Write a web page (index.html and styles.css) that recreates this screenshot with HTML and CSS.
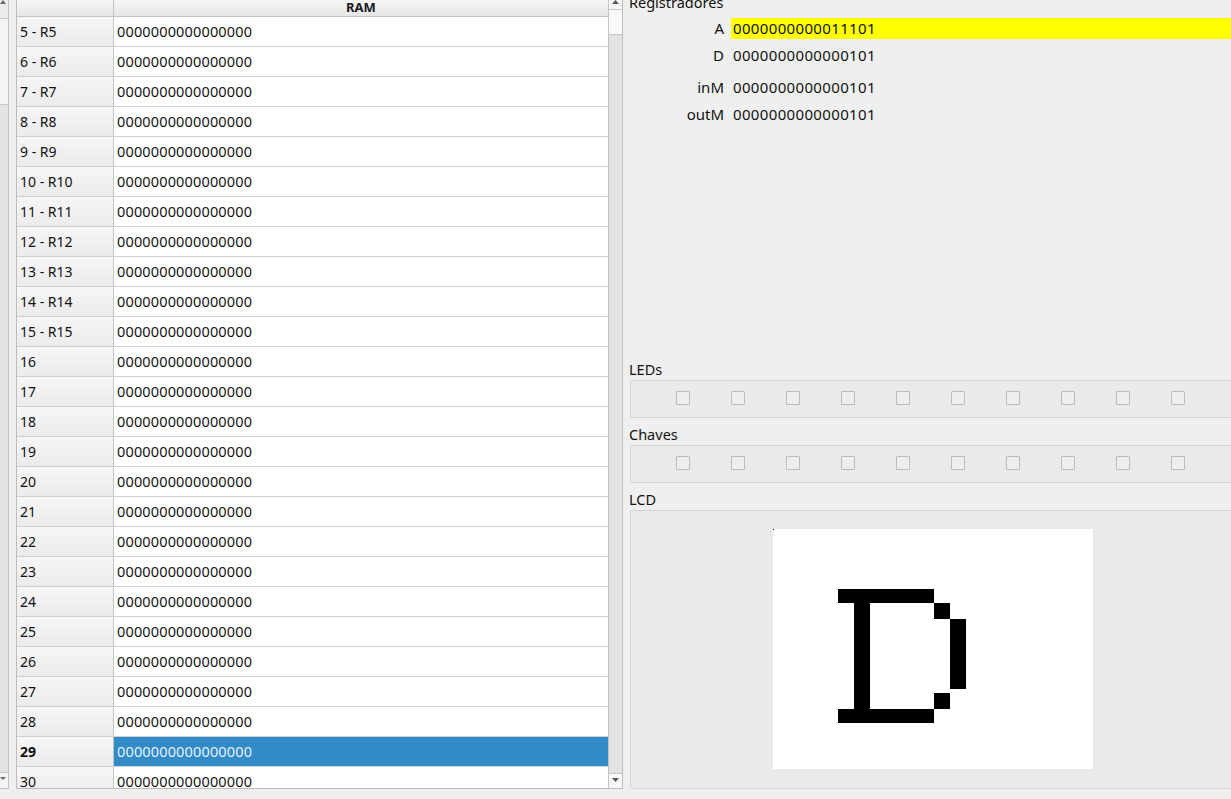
FILE: index.html
```html
<!DOCTYPE html>
<html>
<head>
<meta charset="utf-8">
<link rel="stylesheet" href="styles.css">
</head>
<body>
<div class="app">
  <div class="leftbar">
    <div class="lb-up"><svg width="8" height="6"><polygon points="0,4 3,0 6,4" fill="#6a6a6a"/></svg></div>
    <div class="lb-thumb"></div>
    <div class="lb-track"></div>
    <div class="lb-down"><svg width="8" height="6"><polygon points="0,1 6,1 3,4" fill="#6a6a6a"/></svg></div>
  </div>

  <div class="ram">
    <div class="grid">
      <div class="hdr"><div class="corner"></div><div class="hcell">RAM</div></div>
      <div class="row"><div class="rh">5 - R5</div><div class="rv">0000000000000000</div></div>
      <div class="row"><div class="rh">6 - R6</div><div class="rv">0000000000000000</div></div>
      <div class="row"><div class="rh">7 - R7</div><div class="rv">0000000000000000</div></div>
      <div class="row"><div class="rh">8 - R8</div><div class="rv">0000000000000000</div></div>
      <div class="row"><div class="rh">9 - R9</div><div class="rv">0000000000000000</div></div>
      <div class="row"><div class="rh">10 - R10</div><div class="rv">0000000000000000</div></div>
      <div class="row"><div class="rh">11 - R11</div><div class="rv">0000000000000000</div></div>
      <div class="row"><div class="rh">12 - R12</div><div class="rv">0000000000000000</div></div>
      <div class="row"><div class="rh">13 - R13</div><div class="rv">0000000000000000</div></div>
      <div class="row"><div class="rh">14 - R14</div><div class="rv">0000000000000000</div></div>
      <div class="row"><div class="rh">15 - R15</div><div class="rv">0000000000000000</div></div>
      <div class="row"><div class="rh">16</div><div class="rv">0000000000000000</div></div>
      <div class="row"><div class="rh">17</div><div class="rv">0000000000000000</div></div>
      <div class="row"><div class="rh">18</div><div class="rv">0000000000000000</div></div>
      <div class="row"><div class="rh">19</div><div class="rv">0000000000000000</div></div>
      <div class="row"><div class="rh">20</div><div class="rv">0000000000000000</div></div>
      <div class="row"><div class="rh">21</div><div class="rv">0000000000000000</div></div>
      <div class="row"><div class="rh">22</div><div class="rv">0000000000000000</div></div>
      <div class="row"><div class="rh">23</div><div class="rv">0000000000000000</div></div>
      <div class="row"><div class="rh">24</div><div class="rv">0000000000000000</div></div>
      <div class="row"><div class="rh">25</div><div class="rv">0000000000000000</div></div>
      <div class="row"><div class="rh">26</div><div class="rv">0000000000000000</div></div>
      <div class="row"><div class="rh">27</div><div class="rv">0000000000000000</div></div>
      <div class="row"><div class="rh">28</div><div class="rv">0000000000000000</div></div>
      <div class="row"><div class="rh bold">29</div><div class="rv sel">0000000000000000</div></div>
      <div class="row"><div class="rh">30</div><div class="rv">0000000000000000</div></div>
    </div>
    <div class="vscroll">
      <div class="vs-up"><svg width="13" height="6"><polygon points="3,4 6.5,0 10,4" fill="#5a5a5a"/></svg></div>
      <div class="vs-thumb"></div>
      <div class="vs-track"></div>
      <div class="vs-down"><svg width="13" height="8"><polygon points="3,3 10,3 6.5,7" fill="#5a5a5a"/></svg></div>
    </div>
  </div>

  <div class="right">
    <div class="title">Registradores</div>
    <div class="reg a"><div class="k">A</div><div class="v hl">0000000000011101</div></div>
    <div class="reg d"><div class="k">D</div><div class="v">0000000000000101</div></div>
    <div class="reg in"><div class="k">inM</div><div class="v">0000000000000101</div></div>
    <div class="reg out"><div class="k">outM</div><div class="v">0000000000000101</div></div>

    <div class="group first">
      <div class="glabel">LEDs</div>
      <div class="box">
        <div class="cb"></div><div class="cb"></div><div class="cb"></div><div class="cb"></div><div class="cb"></div>
        <div class="cb"></div><div class="cb"></div><div class="cb"></div><div class="cb"></div><div class="cb"></div>
      </div>
    </div>
    <div class="group">
      <div class="glabel">Chaves</div>
      <div class="box">
        <div class="cb"></div><div class="cb"></div><div class="cb"></div><div class="cb"></div><div class="cb"></div>
        <div class="cb"></div><div class="cb"></div><div class="cb"></div><div class="cb"></div><div class="cb"></div>
      </div>
    </div>
    <div class="group">
      <div class="glabel">LCD</div>
      <div class="lcdbox">
        <svg class="lcd" width="320" height="240" shape-rendering="crispEdges">
          <rect x="0" y="0" width="320" height="240" fill="#ffffff"/>
          <rect x="0" y="0" width="1" height="1" fill="#000"/>
          <rect x="65" y="60" width="96" height="14" fill="#000"/>
          <rect x="81" y="74" width="16" height="106" fill="#000"/>
          <rect x="65" y="180" width="96" height="14" fill="#000"/>
          <rect x="161" y="74" width="16" height="16" fill="#000"/>
          <rect x="177" y="90" width="16" height="70" fill="#000"/>
          <rect x="161" y="164" width="16" height="16" fill="#000"/>
        </svg>
      </div>
    </div>
  </div>
</div>
</body>
</html>
```
FILE: styles.css
```css
html, body {
  margin: 0;
  padding: 0;
}
body {
  width: 1231px;
  height: 799px;
  overflow: hidden;
  background: #efefef;
  font-family: "Noto Sans", "Open Sans", "DejaVu Sans", sans-serif;
  color: #121212;
}
.app {
  display: flex;
  height: 799px;
}

/* left clipped scrollbar */
.leftbar {
  width: 8px;
  height: 788px;
  border-right: 1px solid #c2c2c2;
  border-bottom: 1px solid #c2c2c2;
  display: flex;
  flex-direction: column;
  background: #e3e3e3;
  flex: none;
}
.lb-up {
  height: 18px;
  border-bottom: 1px solid #c8c8c8;
  background: #ececec;
}
.lb-up svg, .lb-down svg { display: block; }
.lb-thumb {
  height: 85px;
  background: #f4f4f4;
  border-bottom: 1px solid #c8c8c8;
}
.lb-track { flex: 1; }
.lb-down {
  height: 12px;
  border-top: 1px solid #c8c8c8;
  background: #f4f4f4;
  padding-top: 3px;
}

/* RAM table */
.ram {
  margin-left: 7px;
  width: 605px;
  height: 788px;
  border-left: 1px solid #bdbdbd;
  border-right: 1px solid #bdbdbd;
  border-bottom: 1px solid #bdbdbd;
  display: flex;
  flex: none;
  overflow: hidden;
}
.grid {
  width: 591px;
  display: flex;
  flex-direction: column;
  overflow: hidden;
  background: #ffffff;
}
.hdr {
  display: flex;
  height: 16px;
  border-bottom: 1px solid #c4c4c4;
  background: linear-gradient(#f7f7f7, #e6e6e6);
  flex: none;
}
.corner {
  width: 96px;
  border-right: 1px solid #c4c4c4;
}
.hcell {
  flex: 1;
  text-align: center;
  font-weight: 700;
  font-size: 13px;
  line-height: 14px;
  color: #1a1a1a;
}
.row {
  display: flex;
  height: 29px;
  border-bottom: 1px solid #d0d0d0;
  flex: none;
  font-size: 14.5px;
  letter-spacing: 0.15px;
  line-height: 29px;
}
.rh {
  width: 93px;
  padding-left: 3px;
  border-right: 1px solid #c4c4c4;
  background: linear-gradient(#f6f6f6, #ebebeb);
  font-size: 14px;
  letter-spacing: 0;
  white-space: nowrap;
}
.rh.bold { font-weight: 700; }
.rv {
  flex: 1;
  padding-left: 3px;
  background: #ffffff;
}
.rv.sel {
  background: #308bc7;
  color: #e9f1f8;
}

/* right scrollbar */
.vscroll {
  width: 13px;
  border-left: 1px solid #c4c4c4;
  background: #e3e3e3;
  display: flex;
  flex-direction: column;
}
.vs-up {
  height: 9px;
  border-bottom: 1px solid #c8c8c8;
  background: #f5f5f5;
}
.vs-up svg, .vs-down svg { display: block; }
.vs-thumb {
  height: 24px;
  background: #f9f9f9;
  border-bottom: 1px solid #c8c8c8;
}
.vs-track { flex: 1; }
.vs-down {
  height: 13px;
  border-top: 1px solid #c8c8c8;
  background: #f7f7f7;
  padding-top: 1px;
}

/* right panel */
.right {
  flex: 1;
  padding-left: 6px;
  overflow: hidden;
  display: flex;
  flex-direction: column;
}
.title {
  font-size: 14.5px;
  line-height: 18px;
  margin-top: -7px;
  height: 18px;
}
.reg {
  display: flex;
  height: 21px;
  line-height: 21px;
  font-size: 15px;
  flex: none;
}
.reg .k {
  width: 95px;
  text-align: right;
  margin-right: 7px;
  flex: none;
}
.reg .v {
  flex: 1;
  padding-left: 2px;
  letter-spacing: 0.35px;
  white-space: nowrap;
}
.reg .v.hl { background: #ffff00; }
.reg.a { margin-top: 7px; }
.reg.d { margin-top: 6px; }
.reg.in { margin-top: 11px; }
.reg.out { margin-top: 6px; }

.group { margin-top: 7px; flex: none; }
.group.first { margin-top: 235px; }
.glabel {
  font-size: 14.5px;
  line-height: 18px;
  height: 18px;
}
.box {
  margin-top: 2px;
  margin-left: 1px;
  width: 640px;
  height: 38px;
  box-sizing: border-box;
  border: 1px solid #d4d4d4;
  border-radius: 2px;
  background: #eaeaea;
  display: flex;
  gap: 41px;
  padding-left: 45px;
  padding-top: 10px;
}
.cb {
  width: 14px;
  height: 14px;
  box-sizing: border-box;
  border: 1px solid #bcbcbc;
  background: #eeeeee;
  border-radius: 1px;
  flex: none;
}
.lcdbox {
  margin-top: 2px;
  margin-left: 1px;
  width: 640px;
  height: 279px;
  box-sizing: border-box;
  border: 1px solid #d4d4d4;
  border-radius: 2px;
  background: #eaeaea;
  padding-left: 142px;
  padding-top: 18px;
}
.lcd { display: block; }
```
